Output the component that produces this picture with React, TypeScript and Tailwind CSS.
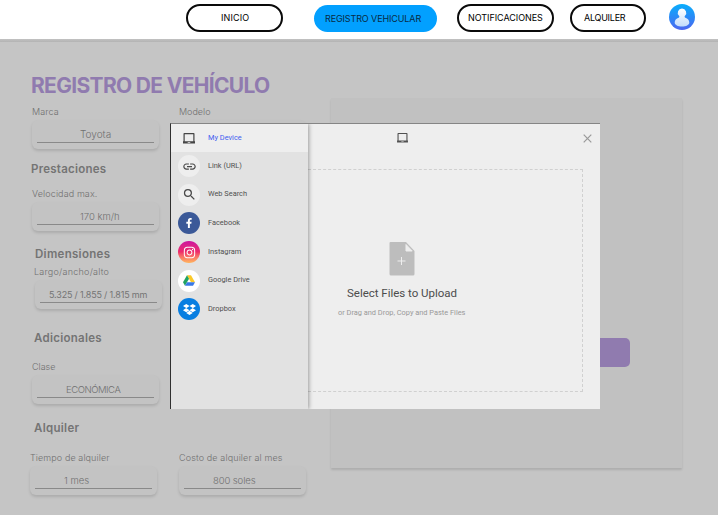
import type { ReactNode } from "react";
import { MdLink, MdSearch } from "react-icons/md";
import { FaDropbox, FaFacebookF, FaInstagram } from "react-icons/fa";

function NavPill({ label, className }: { label: string; className: string }) {
  return (
    <a className={`flex shrink-0 items-center whitespace-nowrap rounded-full text-[9px] ${className}`}>
      {label}
    </a>
  );
}

function Avatar() {
  return (
    <svg className="ml-[23px] h-[26px] w-[26px] shrink-0" viewBox="0 0 26 26">
      <defs>
        <linearGradient id="avatar" x1="0" y1="0" x2="0" y2="1">
          <stop offset="0" stopColor="#08aefc" />
          <stop offset="1" stopColor="#4c66f0" />
        </linearGradient>
        <linearGradient id="person" x1="0" y1="0" x2="0" y2="1">
          <stop offset="0" stopColor="#ffffff" />
          <stop offset="1" stopColor="#c3dcfb" />
        </linearGradient>
      </defs>
      <circle cx="13" cy="13" r="13" fill="url(#avatar)" />
      <path d="M13 4.600a4.200 4.200 0 0 1 3 7.200c-.5.6-.6 1.500.3 1.900 2.500.8 4 2.500 4 4.700 0 2.500-3.300 4-7.300 4s-7.300-1.500-7.300-4c0-2.200 1.500-3.900 4-4.700.9-.4.8-1.300.3-1.900a4.200 4.200 0 0 1 3-7.200z" fill="url(#person)" />
    </svg>
  );
}

function Field({ label, value, labelClass, valueClass, className = "" }: { label: string; value: string; labelClass: string; valueClass: string; className?: string }) {
  return (
    <div className={`h-[46px] w-[127px] shrink-0 ${className}`}>
      <div className={`h-[17px] whitespace-nowrap text-[9px] leading-[17px] font-light text-[#707070] ${labelClass}`}>{label}</div>
      <div className="h-[29px] rounded-[6px] bg-[#c3c3c3] px-[5px] pt-[6px] shadow-[0_2px_3px_rgba(0,0,0,0.13)]">
        <div className={`h-[17px] whitespace-nowrap border-b border-[#898989] leading-[17px] ${valueClass}`}>{value}</div>
      </div>
    </div>
  );
}

function Heading({ children, className }: { children: ReactNode; className: string }) {
  return <h2 className={`h-4 whitespace-nowrap text-[11.500px] leading-4 font-semibold text-[#747474] ${className}`}>{children}</h2>;
}

function DeviceIcon({ className }: { className: string }) {
  return (
    <svg className={className} viewBox="0 0 12 11">
      <path fill="currentColor" fillRule="evenodd" d="M1.300 0h9.400q.8 0 .8.800V8.300H12V10.500H0V8.300H.5V.8Q.5 0 1.300 0zM1.700 1.200v7.100h8.600V1.200zM4.700 9v.7h2.600V9z" />
    </svg>
  );
}

function DriveIcon() {
  return (
    <svg className="h-[11px] w-3" viewBox="0 0 24 21">
      <path d="M8 0h8l8 14h-8z" fill="#fbc928" />
      <path d="M8 0l4 7-8 14-4-7z" fill="#20a261" />
      <path d="M8 14h16l-4 7H4z" fill="#3978e6" />
    </svg>
  );
}

function Source({ icon, label, badge, active = false }: { icon: ReactNode; label: string; badge: string; active?: boolean }) {
  return (
    <li className={`flex items-center pl-[7px] ${active ? "h-7 bg-[#eeeeee] text-[#3f5df0]" : "h-[28.600px] text-[#505050]"}`}>
      <span className={`flex h-[22px] w-[22px] items-center justify-center rounded-full ${badge}`}>{icon}</span>
      <span className="ml-2 pb-px text-[7.400px] leading-[10px]">{label}</span>
    </li>
  );
}

function UploadDialog() {
  return (
    <section className="absolute top-[123px] left-[170px] flex h-[286px] w-[430px] border-t border-l border-t-[#858585] border-l-[#303030] bg-[#eeeeee] font-['Roboto',sans-serif]">
      <ul className="z-10 w-[137px] shrink-0 bg-[#e2e2e2] shadow-[1px_0_4px_rgba(0,0,0,0.35)] [clip-path:inset(0_-8px_0_0)]">
        <Source active label="My Device" badge="text-[#454545]" icon={<DeviceIcon className="h-[11px] w-3" />} />
        <Source label="Link (URL)" badge="bg-[#eeeeee] text-[#484848]" icon={<MdLink size={15} />} />
        <Source label="Web Search" badge="bg-[#eeeeee] text-[#484848]" icon={<MdSearch size={15} />} />
        <Source label="Facebook" badge="bg-[#3b5998] text-white" icon={<FaFacebookF size={10} />} />
        <Source label="Instagram" badge="bg-linear-to-b from-[#cc0fa0] via-[#ee2b69] to-[#ffb55c] text-white" icon={<FaInstagram size={13} />} />
        <Source label="Google Drive" badge="bg-white" icon={<DriveIcon />} />
        <Source label="Dropbox" badge="bg-[#087ee1] text-white" icon={<FaDropbox size={13} />} />
      </ul>
      <div className="flex min-w-0 flex-1 flex-col">
        <header className="flex h-[45px] shrink-0 items-center pr-2 pb-[17px] pl-[89px]">
          <DeviceIcon className="h-[10px] w-[11px] text-[#505050]" />
          <svg className="ml-auto h-[9px] w-[9px]" viewBox="0 0 9 9"><path d="M.7.7l7.600 7.600M8.300.7L.7 8.300" stroke="#999999" strokeWidth="1.200" /></svg>
        </header>
        <div className="mr-[17px] flex h-[223px] flex-col border border-l-0 border-dashed border-[#d0d0d0] pt-[72px]">
          <svg className="ml-[81px] h-[34px] w-[26px]" viewBox="0 0 26 34">
            <path d="M1.500 0H17l8.500 9v23q0 1.500-1.500 1.500H2Q.5 33.500.5 32V1Q.5 0 1.500 0z" fill="#bdbdbd" />
            <path d="M17 2.500V9h6.200zM12.500 15v8M8.500 19h8" stroke="#eeeeee" fill="#eeeeee" />
          </svg>
          <p className="mt-[9px] ml-[39px] whitespace-nowrap text-[11.500px] leading-4 tracking-[-0.020px] text-[#4c4c4c]">Select Files to Upload</p>
          <p className="mt-[5px] ml-[30px] whitespace-nowrap text-[7.400px] leading-[14px] text-[#999999]">or Drag and Drop, Copy and Paste Files</p>
        </div>
      </div>
    </section>
  );
}

export default function App() {
  return (
    <div className="relative flex h-[515px] w-[718px] flex-col overflow-hidden bg-[#c5c5c5] font-['Inter',sans-serif]">
      <nav className="flex h-[39px] shrink-0 items-start bg-white pt-1 pl-[186px]">
        <NavPill label="INICIO" className="h-7 w-[97px] border-2 border-[#0a0a0a] pl-[33px] tracking-[0.150px] text-black" />
        <NavPill label="REGISTRO VEHICULAR" className="mt-px ml-[31px] h-[27px] w-[123px] bg-[#02a0ff] pl-[11px] tracking-[-0.120px] text-[#082b44]" />
        <NavPill label="NOTIFICACIONES" className="ml-5 h-7 w-[97px] border-2 border-[#0a0a0a] pl-[9px] tracking-[-0.050px] text-black" />
        <NavPill label="ALQUILER" className="ml-4 h-7 w-[76px] border-2 border-[#0a0a0a] pl-[12px] tracking-[-0.250px] text-black" />
        <Avatar />
      </nav>
      <div className="h-[3px] shrink-0 bg-linear-to-b from-[#c2c2c2] to-[#b3b3b3]" />
      <main className="flex flex-1 items-start">
        <div className="flex w-[331px] shrink-0 flex-col pt-[31px] pl-[30px]">
          <h1 className="ml-px h-6 whitespace-nowrap text-[21px] leading-[25px] font-bold tracking-[-0.680px] text-[#907baf]">REGISTRO DE VEHÍCULO</h1>
          <div className="mt-[6px] ml-[2px] flex gap-5">
            <Field label="Marca" value="Toyota" labelClass="tracking-[0.100px]" valueClass="pl-[43px] text-[10px] font-light text-[#707070]" />
            <Field label="Modelo" value="" labelClass="" valueClass="" />
          </div>
          <Heading className="mt-3 ml-px tracking-[0.250px]">Prestaciones</Heading>
          <Field className="mt-2 ml-[2px]" label="Velocidad max." value="170 km/h" labelClass="tracking-[0.120px]" valueClass="pl-[43px] text-[9.500px] font-light text-[#707070]" />
          <Heading className="mt-[15px] ml-[5px] tracking-[0.300px]">Dimensiones</Heading>
          <Field className="mt-px ml-[5px]" label="Largo/ancho/alto" value="5.325 / 1.855 / 1.815 mm" labelClass="-ml-px tracking-[0.250px]" valueClass="pl-[9px] text-[9px] font-normal tracking-[-0.170px] text-[#747474]" />
          <Heading className="mt-[21px] ml-1 tracking-[0.280px]">Adicionales</Heading>
          <Field className="mt-3 ml-[2px]" label="Clase" value="ECONÓMICA" labelClass="" valueClass="pl-[29px] text-[9.500px] font-light tracking-[-0.450px] text-[#707070]" />
          <Heading className="mt-4 ml-1 tracking-[0.300px]">Alquiler</Heading>
          <div className="mt-[13px] flex gap-[22px]">
            <Field label="Tiempo de alquiler" value="1 mes" labelClass="tracking-[0.100px]" valueClass="pl-[29px] text-[9.500px] font-light text-[#707070]" />
            <Field label="Costo de alquiler al mes" value="800 soles" labelClass="tracking-[0.130px]" valueClass="pl-[29px] text-[9.500px] font-light tracking-[-0.100px] text-[#707070]" />
          </div>
        </div>
        <aside className="mt-[56px] flex h-[370px] w-[351px] justify-end bg-[#c1c1c1] pt-[240px] pr-[52px] shadow-[0_2px_2px_rgba(0,0,0,0.12)]">
          <div className="h-[29px] w-[90px] rounded-[5px] bg-[#907baf]" />
        </aside>
      </main>
      <UploadDialog />
    </div>
  );
}
